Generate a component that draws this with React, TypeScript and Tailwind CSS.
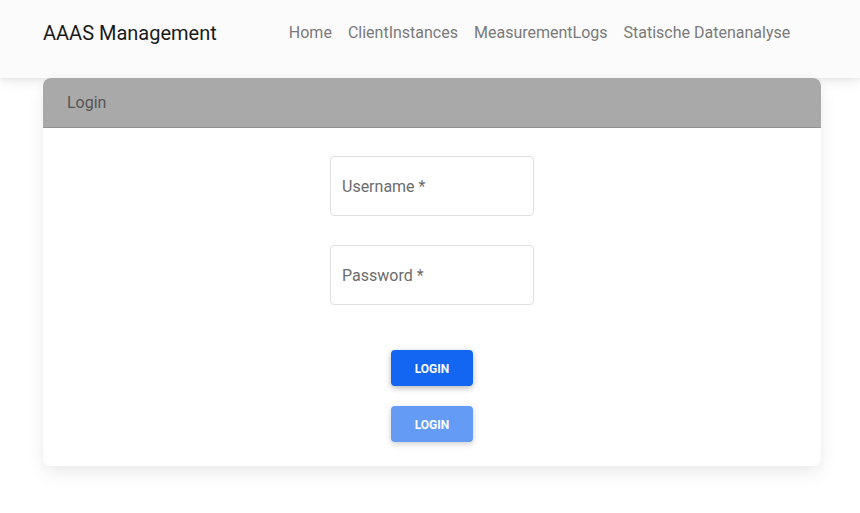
import React from "react";

const links = ["Home", "ClientInstances", "MeasurementLogs", "Statische Datenanalyse"];

function Field({ id, label, type }: { id: string; label: string; type: string }) {
  return (
    <div className="grid h-15 w-51">
      <input
        id={id}
        type={type}
        required
        className="peer col-start-1 row-start-1 w-full rounded border border-[#e0e0e0] bg-transparent px-3 outline-none focus:border-[#1266f1]"
      />
      <label
        htmlFor={id}
        className="pointer-events-none col-start-1 row-start-1 self-center px-3 pt-0.5 text-[#6c6c6c] peer-valid:invisible"
      >
        {label} *
      </label>
    </div>
  );
}

export default function App() {
  return (
    <div className="min-h-screen bg-white font-[Roboto,sans-serif] text-base leading-6 text-[#4f4f4f]">
      <nav className="relative h-[78px] bg-[#fbfbfb] px-[43px] pt-[17px] shadow-[0_4px_12px_0_rgba(0,0,0,0.07),0_2px_4px_rgba(0,0,0,0.05)]">
        <div className="flex items-center">
          <a href="#" className="text-xl leading-8 whitespace-nowrap text-[#1a1a1a]">AAAS Management</a>
          <ul className="ml-16 flex">
            {links.map((link) => (
              <li key={link}>
                <a href="#" className="block px-2 whitespace-nowrap text-[#7a7a7a]">{link}</a>
              </li>
            ))}
          </ul>
        </div>
      </nav>
      <main className="relative mr-[39px] ml-[43px] rounded-lg bg-white shadow-[0_10px_20px_0_rgba(0,0,0,0.05),0_2px_15px_-3px_rgba(0,0,0,0.07)]">
        <h1 className="rounded-t-lg border-b border-[#929292] bg-[#a9a9a9] px-6 pt-[13px] pb-3 text-[#555555]">Login</h1>
        <form className="flex flex-col items-center pt-7 pb-6" onSubmit={(e) => e.preventDefault()}>
          <Field id="username" label="Username" type="text" />
          <div className="mt-[29px]">
            <Field id="password" label="Password" type="password" />
          </div>
          <button type="submit" className="mt-[45px] h-9 w-[82px] rounded bg-[#1266f1] pt-0.5 text-xs font-bold text-white uppercase shadow-[0_2px_5px_0_rgba(0,0,0,0.2),0_2px_10px_0_rgba(0,0,0,0.1)]">
            Login
          </button>
          <button type="button" disabled className="mt-5 h-9 w-[82px] rounded bg-[#1266f1] pt-0.5 text-xs font-bold text-white uppercase opacity-65 shadow-[0_2px_5px_0_rgba(0,0,0,0.2),0_2px_10px_0_rgba(0,0,0,0.1)]">
            Login
          </button>
        </form>
      </main>
    </div>
  );
}
